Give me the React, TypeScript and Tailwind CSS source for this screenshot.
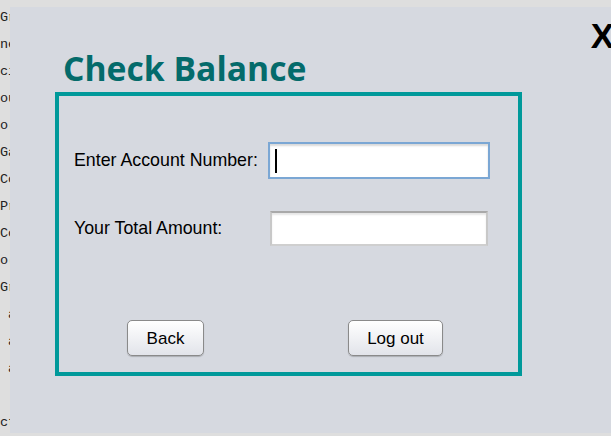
const codeLines = ['Gr', 'ne', 'ci', 'ou', 'o(', 'Ga', 'Co', 'Pr', 'Co', 'o(', 'Gr', ' a', ' a', ' a', '', 'ct']

function FieldRow({ label, focused }: { label: string; focused?: boolean }) {
  return (
    <div className="flex items-center">
      <span className="w-[194px] text-[17.8px] text-black">{label}</span>
      {focused ? (
        <div className="flex h-[37px] w-[222px] items-center border-2 border-[#7ba7d4] bg-white px-[5px] shadow-[inset_0_2px_2px_rgba(0,0,0,0.15)]">
          <span className="h-[24px] w-[2px] bg-black" />
        </div>
      ) : (
        <div className="ml-[2px] h-[35px] w-[218px] border-2 border-t-[#a9a9a9] border-x-[#c8c8c8] border-b-[#cfcfcf] bg-white shadow-[inset_0_2px_2px_rgba(0,0,0,0.1)]" />
      )}
    </div>
  )
}

function Button({ label, className }: { label: string; className: string }) {
  return (
    <button
      className={`h-[36px] rounded-[5px] border border-[#8a8a8a] bg-gradient-to-b from-white to-[#e2e4ea] pt-[1px] text-[17px] text-black shadow-[0_1px_1px_rgba(0,0,0,0.2)] ${className}`}
    >
      {label}
    </button>
  )
}

export default function App() {
  return (
    <div className="flex h-[436px] w-[611px] overflow-hidden bg-[#dedede] font-['Liberation_Sans',Arial,sans-serif]">
      {/* editor text behind the window */}
      <div className="w-[10px] shrink-0 overflow-hidden pt-[4px] font-['Liberation_Mono',monospace] text-[13.5px] leading-[27px] text-[#222]">
        {codeLines.map((l, i) => (
          <div key={i} className="h-[27px] whitespace-pre">{l}</div>
        ))}
      </div>

      <div className="relative mt-[7px] mb-[3px] flex-1 bg-[#d6d9e0]">
        <span className="absolute right-[-3px] top-[11px] text-[35px] font-bold leading-none text-black">X</span>

        <h1 className="ml-[53px] mt-[39px] h-[44px] font-['Open_Sans',sans-serif] text-[33.7px] font-bold leading-[44px] text-[#046b6b]">
          Check Balance
        </h1>

        <div className="ml-[45px] mt-[2px] h-[284px] w-[467px] border-4 border-[#00999a]">
          <div className="flex flex-col gap-[32px] pl-[15px] pt-[46px]">
            <FieldRow label="Enter Account Number:" focused />
            <FieldRow label="Your Total Amount:" />
          </div>
          <div className="mt-[74px] flex pl-[68px]">
            <Button label="Back" className="w-[77px]" />
            <Button label="Log out" className="ml-[144px] w-[95px]" />
          </div>
        </div>
      </div>
    </div>
  )
}
